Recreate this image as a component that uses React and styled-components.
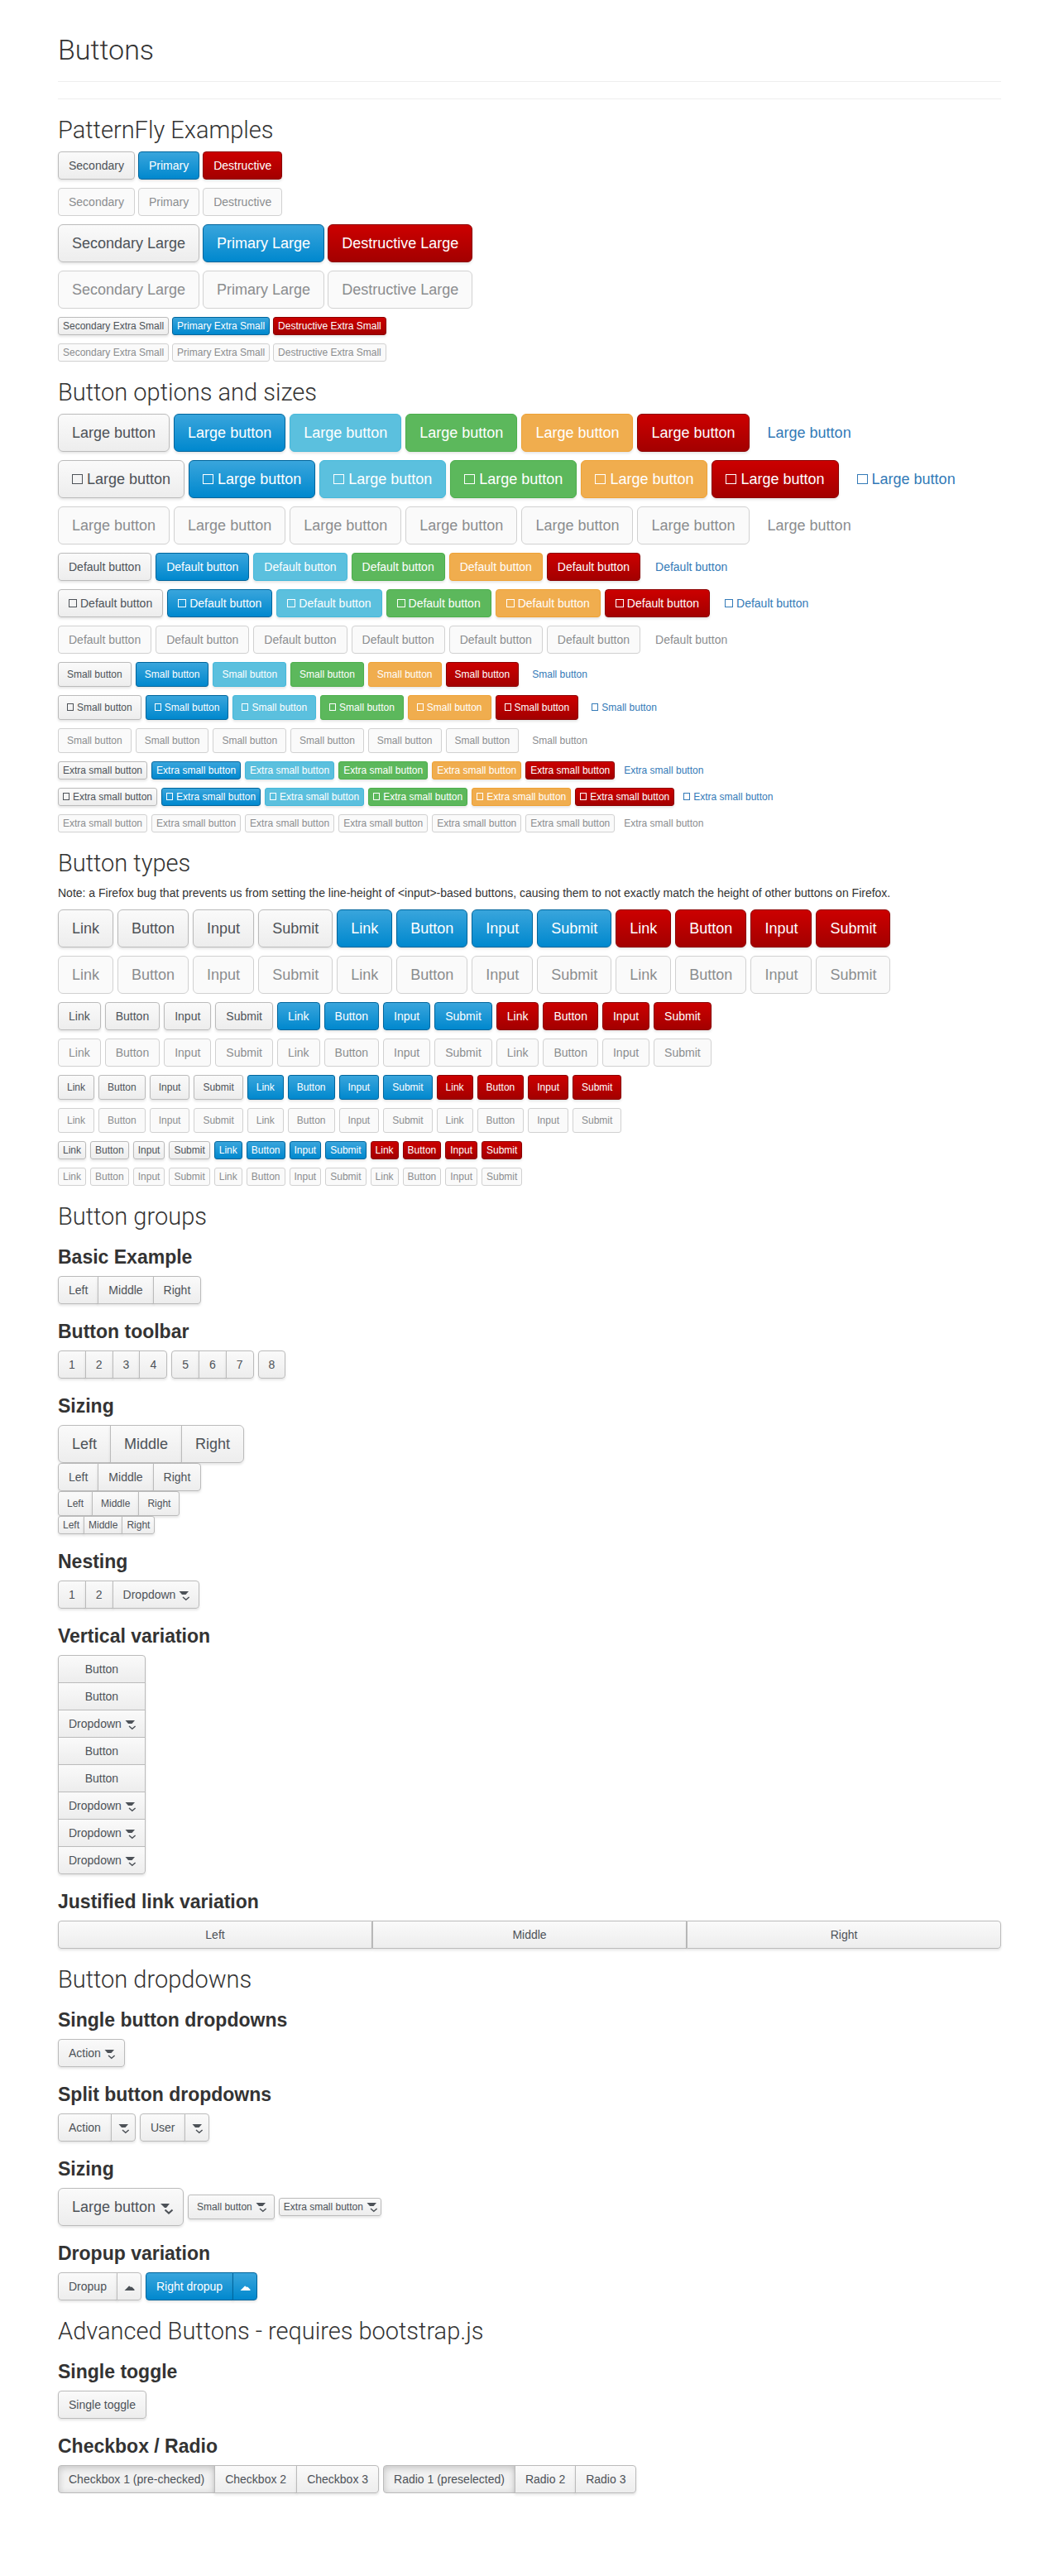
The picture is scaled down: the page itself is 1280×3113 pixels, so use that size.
import React from 'react';
import styled, { createGlobalStyle, css } from 'styled-components';

const GlobalStyle = createGlobalStyle`
  *, *::before, *::after {
    box-sizing: border-box;
  }
  body {
    margin: 0;
    background: #fff;
    color: #333;
    font: 14px/20px "Liberation Sans", Helvetica, Arial, sans-serif;
  }
`;

/* ---------- tokens ---------- */

const sizes = {
  lg: { font: 18, line: 24, pad: '10px 16px', radius: 6, boxW: 13, boxH: 12, boxGap: 5 },
  md: { font: 14, line: 20, pad: '6px 12px', radius: 4, boxW: 10, boxH: 10, boxGap: 4 },
  sm: { font: 12, line: 18, pad: '5px 10px', radius: 3, boxW: 8, boxH: 9, boxGap: 4 },
  xs: { font: 12, line: 18, pad: '1px 5px', radius: 3, boxW: 8, boxH: 9, boxGap: 4 },
};

const variants = {
  default: { color: '#4d5258', border: '#bbb', background: 'linear-gradient(#fafafa, #ededed)' },
  primary: { color: '#fff', border: '#00659c', background: 'linear-gradient(#39a5dc, #0088ce)' },
  info: { color: '#fff', border: '#46b8da', background: '#5bc0de' },
  success: { color: '#fff', border: '#4cae4c', background: '#5cb85c' },
  warning: { color: '#fff', border: '#eea236', background: '#f0ad4e' },
  danger: { color: '#fff', border: '#8b0000', background: 'linear-gradient(#cc0000, #a30000)' },
  link: { color: '#337ab7', border: 'transparent', background: 'none' },
};

/* ---------- page ---------- */

const Page = styled.main`
  max-width: 1170px;
  margin: 0 auto;
  padding: 40px 15px 100px;
`;

const Title = styled.h1`
  margin: 0;
  padding-bottom: 18px;
  border-bottom: 1px solid #eee;
  font: 300 34px/40px Roboto, "Liberation Sans", sans-serif;
`;

const Rule = styled.hr`
  margin: 20px 0;
  border: 0;
  border-top: 1px solid #eee;
`;

const Section = styled.section`
  margin-top: 21px;
`;

const Heading = styled.h2`
  margin: 0 0 9px;
  font: 300 29px/33px Roboto, "Liberation Sans", sans-serif;
`;

const SubHeading = styled.h3`
  margin: 20px 0 10px;
  font-size: 23px;
  line-height: 26px;
  font-weight: 700;

  ${Heading} + & {
    margin-top: 19px;
  }
`;

const Note = styled.p`
  margin: 0 0 10px;
`;

const Rows = styled.div`
  display: flex;
  flex-direction: column;
  gap: 10px;
`;

const Row = styled.div`
  display: flex;
  flex-wrap: wrap;
  align-items: center;
  gap: ${(p) => p.$gap || 5}px;
`;

/* ---------- buttons ---------- */

const disabledLook = css`
  color: #8b8d8f;
  background: ${(p) => (p.$variant === 'link' ? 'none' : '#fafafa')};
  border-color: ${(p) => (p.$variant === 'link' ? 'transparent' : '#d1d1d1')};
  box-shadow: none;
  cursor: not-allowed;
`;

const pressedLook = css`
  background: #f1f1f1;
  box-shadow: inset 0 2px 8px rgba(3, 3, 3, 0.2);
`;

const Btn = styled.button`
  display: inline-block;
  margin: 0;
  padding: ${(p) => sizes[p.$size || 'md'].pad};
  border: 1px solid ${(p) => variants[p.$variant || 'default'].border};
  border-radius: ${(p) => sizes[p.$size || 'md'].radius}px;
  background: ${(p) => variants[p.$variant || 'default'].background};
  box-shadow: ${(p) => (p.$variant === 'link' ? 'none' : '0 2px 3px rgba(3, 3, 3, 0.1)')};
  color: ${(p) => variants[p.$variant || 'default'].color};
  font-family: inherit;
  font-size: ${(p) => sizes[p.$size || 'md'].font}px;
  line-height: ${(p) => sizes[p.$size || 'md'].line}px;
  font-weight: 400;
  text-align: center;
  text-decoration: none;
  white-space: nowrap;
  cursor: pointer;
  ${(p) => p.$off && disabledLook}
  ${(p) => p.$pressed && pressedLook}
`;

const ToggleBtn = styled(Btn)`
  padding-left: 8px;
  padding-right: 8px;
`;

const Box = styled.span`
  display: inline-block;
  width: ${(p) => sizes[p.$size].boxW}px;
  height: ${(p) => sizes[p.$size].boxH}px;
  margin-right: ${(p) => sizes[p.$size].boxGap}px;
  border: 1px solid currentColor;
`;

const Group = styled.div`
  display: inline-flex;

  > * + * {
    margin-left: -1px;
  }
  > *:not(:last-child) {
    border-top-right-radius: 0;
    border-bottom-right-radius: 0;
  }
  > *:not(:first-child) {
    border-top-left-radius: 0;
    border-bottom-left-radius: 0;
  }
`;

const GroupStack = styled.div`
  display: flex;
  flex-direction: column;
  align-items: flex-start;
`;

const VerticalGroup = styled.div`
  display: inline-flex;
  flex-direction: column;
  vertical-align: top;

  > * + * {
    margin-top: -1px;
  }
  > *:not(:last-child) {
    border-bottom-left-radius: 0;
    border-bottom-right-radius: 0;
  }
  > *:not(:first-child) {
    border-top-left-radius: 0;
    border-top-right-radius: 0;
  }
`;

const JustifiedGroup = styled.div`
  display: flex;

  > * {
    flex: 1;
  }
  > *:not(:last-child) {
    border-top-right-radius: 0;
    border-bottom-right-radius: 0;
  }
  > *:not(:first-child) {
    border-top-left-radius: 0;
    border-bottom-left-radius: 0;
  }
`;

const HiddenInput = styled.input`
  position: absolute;
  width: 1px;
  height: 1px;
  margin: 0;
  opacity: 0;
  pointer-events: none;
`;

const CaretSvg = styled.svg`
  overflow: visible;
  vertical-align: ${(p) => p.$drop}px;
  margin-left: ${(p) => (p.$alone ? 0 : 4)}px;
`;

function CaretDown({ size = 'md', alone }) {
  if (size === 'lg') {
    return (
      <CaretSvg $drop={-3} $alone={alone} width="13" height="13" viewBox="0 0 13 13" aria-hidden="true">
        <path d="M2 0H13L9 5H7Z" fill="currentColor" />
        <path d="M7.5 7.5L12 11.6L16.5 7.5" fill="none" stroke="currentColor" strokeWidth="2" />
      </CaretSvg>
    );
  }
  return (
    <CaretSvg $drop={-2} $alone={alone} width="12" height="11" viewBox="0 0 12 11" aria-hidden="true">
      <path d="M0.5 0H12L8.5 4H4Z" fill="currentColor" />
      <path d="M5 7L8.8 10.2L12.6 7" fill="none" stroke="currentColor" strokeWidth="1.5" />
    </CaretSvg>
  );
}

function CaretUp() {
  return (
    <CaretSvg $drop={0} $alone width="12" height="6" viewBox="0 0 12 6" aria-hidden="true">
      <path d="M0.5 6L5 1.5Q6 0 7 1L8 2Q9 1 10 2.2L12.5 4.8V6Z" fill="currentColor" />
    </CaretSvg>
  );
}

/* ---------- content ---------- */

const allVariants = ['default', 'primary', 'info', 'success', 'warning', 'danger', 'link'];
const mainVariants = ['default', 'primary', 'danger'];
const exampleNames = { default: 'Secondary', primary: 'Primary', danger: 'Destructive' };
const exampleSizes = [
  ['md', ''],
  ['lg', ' Large'],
  ['xs', ' Extra Small'],
];
const optionSizes = [
  ['lg', 'Large button'],
  ['md', 'Default button'],
  ['sm', 'Small button'],
  ['xs', 'Extra small button'],
];

function ExampleRow({ size, suffix, off }) {
  return (
    <Row $gap={4}>
      {mainVariants.map((v) => (
        <Btn key={v} type="button" $size={size} $variant={v} $off={off} disabled={off}>
          {exampleNames[v] + suffix}
        </Btn>
      ))}
    </Row>
  );
}

function OptionRow({ size, label, off, icon }) {
  return (
    <Row>
      {allVariants.map((v) => (
        <Btn key={v} type="button" $size={size} $variant={v} $off={off} disabled={off}>
          {icon && <Box $size={size} aria-hidden="true" />}
          {label}
        </Btn>
      ))}
    </Row>
  );
}

function TypeRow({ size, off }) {
  return (
    <Row>
      {mainVariants.map((v) => (
        <React.Fragment key={v}>
          <Btn as="a" href="#link" role="button" aria-disabled={off} $size={size} $variant={v} $off={off}>
            Link
          </Btn>
          <Btn type="button" $size={size} $variant={v} $off={off} disabled={off}>
            Button
          </Btn>
          <Btn as="input" type="button" value="Input" readOnly $size={size} $variant={v} $off={off} disabled={off} />
          <Btn as="input" type="submit" value="Submit" readOnly $size={size} $variant={v} $off={off} disabled={off} />
        </React.Fragment>
      ))}
    </Row>
  );
}

function ButtonGroup({ labels, size }) {
  return (
    <Group role="group">
      {labels.map((l) => (
        <Btn key={l} type="button" $size={size}>
          {l}
        </Btn>
      ))}
    </Group>
  );
}

function DropdownButton({ children, size = 'md' }) {
  return (
    <Btn type="button" aria-haspopup="true" $size={size}>
      {children}
      <CaretDown size={size} />
    </Btn>
  );
}

function SplitButton({ label, variant, up }) {
  return (
    <Group role="group">
      <Btn type="button" $variant={variant}>
        {label}
      </Btn>
      <ToggleBtn type="button" aria-haspopup="true" aria-label={`Toggle ${label} menu`} $variant={variant}>
        {up ? <CaretUp /> : <CaretDown alone />}
      </ToggleBtn>
    </Group>
  );
}

function ChoiceGroup({ type, labels }) {
  const [picked, setPicked] = React.useState([0]);
  const toggle = (i) => {
    if (type === 'radio') setPicked([i]);
    else setPicked(picked.includes(i) ? picked.filter((n) => n !== i) : [...picked, i]);
  };
  return (
    <Group role="group">
      {labels.map((l, i) => (
        <Btn as="label" key={l} $pressed={picked.includes(i)}>
          <HiddenInput type={type} name={`${type}-options`} checked={picked.includes(i)} onChange={() => toggle(i)} />
          {l}
        </Btn>
      ))}
    </Group>
  );
}

const directions = ['Left', 'Middle', 'Right'];
const verticalItems = ['Button', 'Button', 'Dropdown', 'Button', 'Button', 'Dropdown', 'Dropdown', 'Dropdown'];

export default function App() {
  return (
    <>
      <GlobalStyle />
      <Page>
        <Title>Buttons</Title>
        <Rule />

        <Section>
          <Heading>PatternFly Examples</Heading>
          <Rows>
            {exampleSizes.map(([size, suffix]) => (
              <React.Fragment key={size}>
                <ExampleRow size={size} suffix={suffix} />
                <ExampleRow size={size} suffix={suffix} off />
              </React.Fragment>
            ))}
          </Rows>
        </Section>

        <Section>
          <Heading>Button options and sizes</Heading>
          <Rows>
            {optionSizes.map(([size, label]) => (
              <React.Fragment key={size}>
                <OptionRow size={size} label={label} />
                <OptionRow size={size} label={label} icon />
                <OptionRow size={size} label={label} off />
              </React.Fragment>
            ))}
          </Rows>
        </Section>

        <Section>
          <Heading>Button types</Heading>
          <Note>
            Note: a Firefox bug that prevents us from setting the line-height of &lt;input&gt;-based buttons, causing
            them to not exactly match the height of other buttons on Firefox.
          </Note>
          <Rows>
            {['lg', 'md', 'sm', 'xs'].map((size) => (
              <React.Fragment key={size}>
                <TypeRow size={size} />
                <TypeRow size={size} off />
              </React.Fragment>
            ))}
          </Rows>
        </Section>

        <Section>
          <Heading>Button groups</Heading>

          <SubHeading>Basic Example</SubHeading>
          <Row>
            <ButtonGroup labels={directions} />
          </Row>

          <SubHeading>Button toolbar</SubHeading>
          <Row role="toolbar">
            <ButtonGroup labels={['1', '2', '3', '4']} />
            <ButtonGroup labels={['5', '6', '7']} />
            <ButtonGroup labels={['8']} />
          </Row>

          <SubHeading>Sizing</SubHeading>
          <GroupStack>
            {['lg', 'md', 'sm', 'xs'].map((size) => (
              <ButtonGroup key={size} labels={directions} size={size} />
            ))}
          </GroupStack>

          <SubHeading>Nesting</SubHeading>
          <Row>
            <Group role="group">
              <Btn type="button">1</Btn>
              <Btn type="button">2</Btn>
              <DropdownButton>Dropdown</DropdownButton>
            </Group>
          </Row>

          <SubHeading>Vertical variation</SubHeading>
          <VerticalGroup role="group">
            {verticalItems.map((label, i) =>
              label === 'Dropdown' ? (
                <DropdownButton key={i}>{label}</DropdownButton>
              ) : (
                <Btn key={i} type="button">
                  {label}
                </Btn>
              )
            )}
          </VerticalGroup>

          <SubHeading>Justified link variation</SubHeading>
          <JustifiedGroup role="group">
            {directions.map((label) => (
              <Btn as="a" key={label} href={`#${label.toLowerCase()}`} role="button">
                {label}
              </Btn>
            ))}
          </JustifiedGroup>
        </Section>

        <Section>
          <Heading>Button dropdowns</Heading>

          <SubHeading>Single button dropdowns</SubHeading>
          <Row>
            <DropdownButton>Action</DropdownButton>
          </Row>

          <SubHeading>Split button dropdowns</SubHeading>
          <Row>
            <SplitButton label="Action" />
            <SplitButton label="User" />
          </Row>

          <SubHeading>Sizing</SubHeading>
          <Row>
            <DropdownButton size="lg">Large button</DropdownButton>
            <DropdownButton size="sm">Small button</DropdownButton>
            <DropdownButton size="xs">Extra small button</DropdownButton>
          </Row>

          <SubHeading>Dropup variation</SubHeading>
          <Row>
            <SplitButton label="Dropup" up />
            <SplitButton label="Right dropup" variant="primary" up />
          </Row>
        </Section>

        <Section>
          <Heading>Advanced Buttons - requires bootstrap.js</Heading>

          <SubHeading>Single toggle</SubHeading>
          <Row>
            <Btn type="button" aria-pressed="false">
              Single toggle
            </Btn>
          </Row>

          <SubHeading>Checkbox / Radio</SubHeading>
          <Row>
            <ChoiceGroup type="checkbox" labels={['Checkbox 1 (pre-checked)', 'Checkbox 2', 'Checkbox 3']} />
            <ChoiceGroup type="radio" labels={['Radio 1 (preselected)', 'Radio 2', 'Radio 3']} />
          </Row>
        </Section>
      </Page>
    </>
  );
}
